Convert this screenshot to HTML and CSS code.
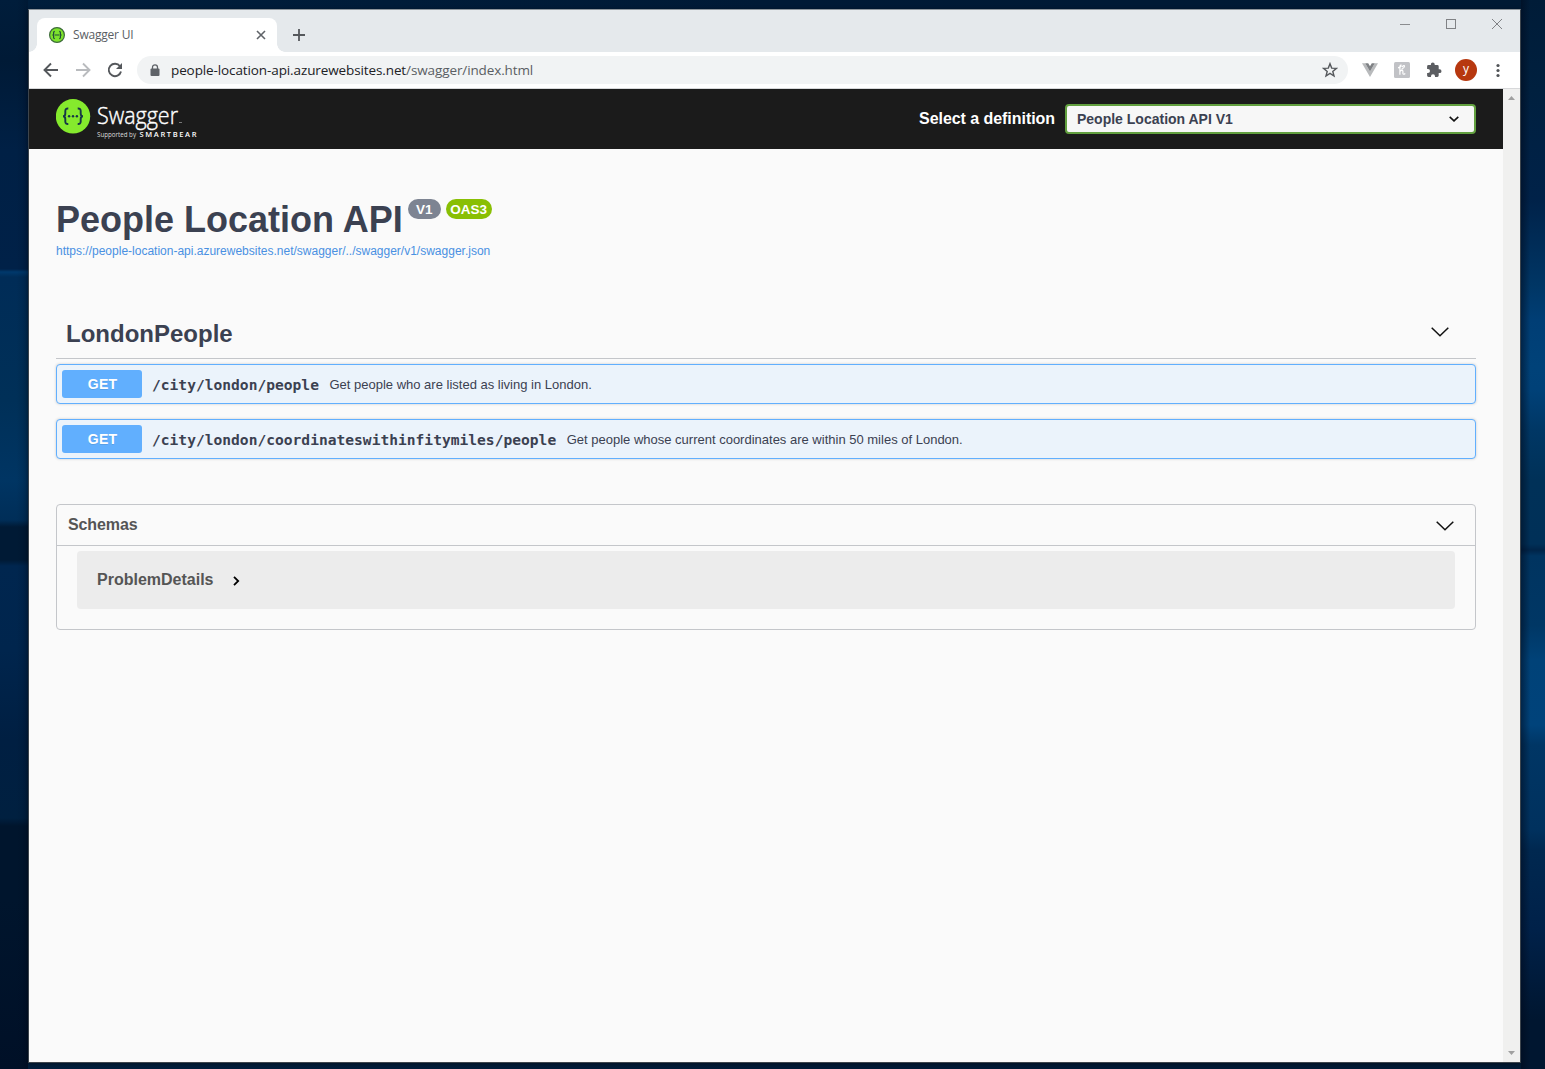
FILE: index.html
```html
<!DOCTYPE html>
<html lang="en">
<head>
<meta charset="utf-8">
<title>Swagger UI</title>
<link rel="stylesheet" href="styles.css">
</head>
<body>
<div class="desktop">
  <div class="wall wall-left"></div>
  <div class="window">
    <div class="tabstrip">
      <div class="tab">
        <svg class="favicon" width="16" height="16" viewBox="0 0 16 16"><circle cx="8" cy="8" r="7.4" fill="#7de32c" stroke="#3d6b3a" stroke-width="1.2"/><path d="M5.8 4.3Q4.6 4.3 4.6 5.5V7Q4.6 8 3.5 8Q4.6 8 4.6 9V10.500Q4.600 11.700 5.800 11.700M10.200 4.300Q11.400 4.300 11.400 5.500V7Q11.400 8 12.500 8Q11.400 8 11.400 9V10.500Q11.400 11.700 10.200 11.700M5.500 8H10.500" fill="none" stroke="#234a3b" stroke-width="1.200"/></svg>
        <span class="tab-title">Swagger UI</span>
        <svg class="tab-close" width="10" height="10" viewBox="0 0 10 10"><path d="M1 1L9 9M9 1L1 9" stroke="#5f6368" stroke-width="1.600"/></svg>
      </div>
      <svg class="new-tab" width="14" height="14" viewBox="0 0 14 14"><path d="M7 1V13M1 7H13" stroke="#55585c" stroke-width="1.800"/></svg>
      <div class="controls">
        <svg width="11" height="11" viewBox="0 0 11 11"><path d="M0 5.500H10" stroke="#8a8c8f"/></svg>
        <svg width="11" height="11" viewBox="0 0 11 11"><rect x="0.500" y="0.500" width="9" height="9" fill="none" stroke="#808285"/></svg>
        <svg width="11" height="11" viewBox="0 0 11 11"><path d="M0 0L10 10M10 0L0 10" stroke="#808285"/></svg>
      </div>
    </div>
    <div class="toolbar">
      <svg class="nav" width="16" height="16" viewBox="0 0 16 16"><path d="M15 8H2M8 1.500L1.500 8L8 14.500" fill="none" stroke="#55585c" stroke-width="1.900"/></svg>
      <svg class="nav" width="16" height="16" viewBox="0 0 16 16"><path d="M1 8H14M8 1.500L14.500 8L8 14.500" fill="none" stroke="#b9bbbe" stroke-width="1.900"/></svg>
      <svg class="nav" width="16" height="16" viewBox="0 0 16 16"><path d="M13 4.300A6.200 6.200 0 1 0 14 9.500" fill="none" stroke="#55585c" stroke-width="1.900"/><path d="M15 1V7H9Z" fill="#55585c"/></svg>
      <div class="omnibox">
        <svg width="10" height="13" viewBox="0 0 10 13"><rect x="0.500" y="4.500" width="9" height="7.500" rx="1" fill="#5f6368"/><path d="M2.500 5V3.300A2.500 2.500 0 0 1 7.500 3.300V5" fill="none" stroke="#5f6368" stroke-width="1.300"/></svg>
        <span class="url">people-location-api.azurewebsites.net<span class="path">/swagger/index.html</span></span>
        <svg class="star" width="16" height="16" viewBox="0 0 16 16"><path d="M8 1.700L9.700 6.100L14.400 6.400L10.800 9.400L12 14L8 11.400L4 14L5.200 9.400L1.600 6.400L6.300 6.100Z" fill="none" stroke="#55585c" stroke-width="1.400"/></svg>
      </div>
      <div class="extensions">
        <svg width="16" height="16" viewBox="0 0 16 16"><path d="M0 1.200H3.200L8 9.500L12.800 1.200H16L8 15Z" fill="#b8babc"/><path d="M3.200 1.200H6.200L8 4.200L9.800 1.200H12.800L8 9.600Z" fill="#7e8184"/></svg>
        <svg width="16" height="16" viewBox="0 0 16 16"><rect width="16" height="16" rx="1.500" fill="#c1c2c6"/><path d="M4 5.800Q7.200 5.200 7 3Q5.800 3 5.900 6V12.800M5.900 9.500Q8.800 6.800 8.900 9.500V11.500Q9.200 13 11.300 11.500M7.800 5.200Q10.500 2.300 10.500 4.300Q10.300 6.300 7.500 7.300" fill="none" stroke="#fff" stroke-width="1.200"/></svg>
        <svg width="16" height="16" viewBox="0 0 16 16"><path d="M13.600 7.300H12.700V4.500Q12.700 3.100 11.300 3.100H8.700V2.300A1.900 1.900 0 0 0 4.900 2.300V3.100H2.500Q1.100 3.100 1.100 4.500V7H2A2 2 0 0 1 2 11H1.100V13.600Q1.100 15 2.500 15H5V14.200A2 2 0 0 1 9 14.200V15H11.300Q12.700 15 12.700 13.600V11.100H13.600A1.900 1.900 0 0 0 13.600 7.300Z" fill="#5b5d61"/></svg>
        <span class="avatar">y</span>
        <svg width="4" height="16" viewBox="0 0 4 16"><g fill="#505357"><circle cx="2" cy="3.500" r="1.600"/><circle cx="2" cy="8.500" r="1.600"/><circle cx="2" cy="13.500" r="1.600"/></g></svg>
      </div>
    </div>
    <div class="viewport">
      <div class="page">
        <header class="topbar">
          <svg class="logo" width="142" height="44" viewBox="0 0 142 44">
            <circle cx="17" cy="17.300" r="17.200" fill="#85ea2d"/>
            <path d="M12.300 9.500Q9.300 9.300 9.300 12V14.500Q9.300 17.300 7 17.300Q9.300 17.300 9.300 20V22.500Q9.300 25.200 12.300 25M21.700 9.500Q24.700 9.300 24.700 12V14.500Q24.700 17.300 27 17.300Q24.700 17.300 24.700 20V22.500Q24.700 25.200 21.700 25" fill="none" stroke="#173647" stroke-width="1.900"/>
            <g fill="#173647"><circle cx="13.100" cy="17.300" r="1.200"/><circle cx="17" cy="17.300" r="1.200"/><circle cx="20.900" cy="17.300" r="1.200"/></g>
            <text class="brand" x="41" y="25" textLength="81" lengthAdjust="spacingAndGlyphs">Swagger</text>
            <path d="M123 23.500H126" stroke="#777"/>
            <text class="support" x="41" y="38" textLength="39" lengthAdjust="spacingAndGlyphs">Supported by</text>
            <text class="bear" x="83.500" y="38" textLength="57" lengthAdjust="spacing">SMARTBEAR</text>
          </svg>
          <div class="definition">
            <span class="definition-label">Select a definition</span>
            <div class="select">People Location API V1
              <svg width="10" height="6" viewBox="0 0 10 6"><path d="M0.700 0.800L5 4.800L9.300 0.800" fill="none" stroke="#111" stroke-width="1.600"/></svg>
            </div>
          </div>
        </header>
        <main class="content">
          <div class="info">
            <h1>People Location API</h1><span class="badge version">V1</span><span class="badge oas">OAS3</span>
          </div>
          <a class="spec-url">https://people-location-api.azurewebsites.net/swagger/../swagger/v1/swagger.json</a>
          <section class="tag">
            <div class="tag-head"><h2>LondonPeople</h2>
              <svg width="18" height="10" viewBox="0 0 18 10"><path d="M0.700 0.700L9 8.800L17.300 0.700" fill="none" stroke="#111" stroke-width="1.500"/></svg></div>
            <div class="operation"><span class="method">GET</span><span class="route">/city/london/people</span><span class="summary">Get people who are listed as living in London.</span></div>
            <div class="operation"><span class="method">GET</span><span class="route">/city/london/coordinateswithinfitymiles/people</span><span class="summary">Get people whose current coordinates are within 50 miles of London.</span></div>
          </section>
          <section class="schemas">
            <div class="schemas-head"><h3>Schemas</h3>
              <svg width="18" height="10" viewBox="0 0 18 10"><path d="M0.700 0.700L9 8.800L17.300 0.700" fill="none" stroke="#111" stroke-width="1.500"/></svg></div>
            <div class="model">ProblemDetails
              <svg width="7" height="10" viewBox="0 0 7 10"><path d="M1 0.800L5.200 5L1 9.200" fill="none" stroke="#000" stroke-width="1.800"/></svg></div>
          </section>
        </main>
      </div>
      <div class="scrollbar">
        <svg width="7" height="4" viewBox="0 0 7 4"><path d="M0 4L3.500 0L7 4Z" fill="#a0a0a0"/></svg>
        <svg width="7" height="4" viewBox="0 0 7 4"><path d="M0 0H7L3.500 4Z" fill="#a0a0a0"/></svg>
      </div>
    </div>
  </div>
  <div class="wall wall-right"></div>
</div>
</body>
</html>
```
FILE: styles.css
```css
* { box-sizing: border-box; }
body { margin: 0; font-family: "Liberation Sans", Arial, sans-serif; color: #3b4151; overflow: hidden; }
svg { display: block; flex: none; }
h1, h2, h3 { margin: 0; }

.desktop {
  display: grid;
  grid-template-columns: 28px 1493px 24px;
  height: 1069px;
  background: linear-gradient(90deg, #001e3c, #001a36 50%, #001a34);
}
.wall-left {
  background: linear-gradient(90deg, transparent 60%, rgba(0, 8, 25, .2)),
    linear-gradient(#001d3b 0, #001a36 60px, #002045 150px, #002148 269px, #00396c 272px, #002c57 277px, #003058 400px, #003563 480px, #002e58 520px, #001a35 527px, #001a35 560px, #00264f 566px, #00254d 650px, #001f42 740px, #002040 818px, #00152d 826px, #00152d 900px, #001027 1069px);
}
.wall-right {
  background: linear-gradient(90deg, rgba(0, 8, 25, .5), transparent 40%),
    linear-gradient(#001c38 0, #00203f 90px, #002249 200px, #003665 285px, #003e75 320px, #004279 366px, #004178 390px, #003765 430px, #003158 480px, #003058 544px, #002448 550px, #003460 556px, #003765 625px, #004278 660px, #00437b 725px, #003665 745px, #00315e 830px, #002850 850px, #002149 930px, #001630 1020px, #001630 1069px);
}

.window {
  display: flex;
  flex-direction: column;
  height: 1054px;
  margin-top: 9px;
  border: 1px solid #3d454d;
  border-top-color: #8e959b;
  background: #fff;
  box-shadow: 0 1px 4px rgba(0, 0, 0, .4);
}
.tabstrip { display: flex; flex: none; height: 42px; padding-left: 8px; background: #e5e9ec; }
.tab {
  position: relative;
  display: flex;
  align-items: center;
  width: 240px;
  height: 34px;
  margin-top: 8px;
  padding: 0 11px 0 12px;
  border-radius: 8px 8px 0 0;
  background: #fff;
}
.tab::before, .tab::after {
  content: "";
  position: absolute;
  bottom: 0;
  width: 8px;
  height: 8px;
}
.tab::before { left: -8px; background: radial-gradient(circle at 0 0, transparent 7.5px, #fff 8px); }
.tab::after { right: -8px; background: radial-gradient(circle at 100% 0, transparent 7.5px, #fff 8px); }
.tab-title { margin: 0 0 2px 8px; font: 12px "Open Sans", sans-serif; letter-spacing: -.2px; color: #5a5e64; }
.tab-close { margin-left: auto; }
.new-tab { margin: 18px 0 0 15px; }
.controls { display: flex; gap: 35px; margin: 9px 17px 0 auto; }

.toolbar { display: flex; flex: none; align-items: center; height: 37px; padding-left: 14px; border-bottom: 1px solid #d7d8da; background: #fff; }
.nav { margin-right: 16px; }
.omnibox { display: flex; align-items: center; width: 1211px; height: 28px; margin-left: -2px; padding: 0 10px 0 13px; border-radius: 14px; background: #f1f3f4; }
.url { margin-left: 11px; font: 13.5px "Open Sans", sans-serif; letter-spacing: -.11px; color: #202124; white-space: nowrap; }
.path { color: #5a5e63; }
.star { margin-left: auto; }
.extensions { display: flex; align-items: center; gap: 16px; margin-left: 14px; }
.avatar { width: 22px; height: 22px; margin: 0 -3px; border-radius: 50%; background: #b7380f; color: #fff; font: 12px/20px "Open Sans", sans-serif; text-align: center; }
.avatar + svg { margin-left: 6px; }

.viewport { display: flex; flex: 1; min-height: 0; }
.page { width: 1474px; background: #fafafa; }
.scrollbar { display: flex; flex-direction: column; justify-content: space-between; align-items: center; width: 17px; padding: 7px 0; background: #f0f0ef; }

.topbar { display: flex; justify-content: space-between; height: 60px; padding: 10px 27px 0; background: #1b1b1b; }
.brand { font: 300 23px "Open Sans", sans-serif; fill: #fff; stroke: #fff; stroke-width: .4px; }
.support { font: 6.5px "Open Sans", sans-serif; fill: #ddd; }
.bear { font: 600 7.5px "Open Sans", sans-serif; fill: #fff; }
.definition { display: flex; align-items: center; gap: 10px; height: 40px; color: #fff; font-size: 16px; font-weight: bold; }
.definition-label { letter-spacing: -.05px; }
.select { display: flex; align-items: center; justify-content: space-between; width: 411px; height: 30px; padding: 0 15px 0 10px; border: 2px solid #62a03f; border-radius: 4px; background: #f7f7f7; color: #3b4151; font-size: 14px; }

.content { padding: 48px 27px 0; }
.info { display: flex; align-items: flex-start; height: 46px; }
.info h1 { font-size: 36px; line-height: 46px; white-space: nowrap; }
.badge { height: 20px; margin: 2px 0 0 5px; border-radius: 10px; color: #fff; font-size: 13.5px; font-weight: bold; line-height: 21px; text-align: center; }
.version { width: 33px; background: #7d8492; }
.oas { width: 46px; background: #89bf04; }
.spec-url { display: block; height: 16px; color: #4990e2; font-size: 12px; line-height: 16px; }

.tag { margin-top: 50px; }
.tag-head { display: flex; align-items: center; justify-content: space-between; height: 50px; margin-bottom: 5px; padding: 0 27px 0 10px; border-bottom: 1px solid #c4c6ca; }
.tag-head h2 { font-size: 24px; }
.tag-head svg { margin-bottom: 3px; }
.operation { display: flex; align-items: center; height: 40px; margin-bottom: 15px; padding: 0 5px; border: 1px solid #61affe; border-radius: 4px; background: #ebf3fb; box-shadow: 0 0 3px rgba(0, 0, 0, .19); }
.method { width: 80px; height: 28px; padding-left: 1px; border-radius: 3px; background: #61affe; color: #fff; font-size: 14px; font-weight: bold; letter-spacing: .2px; line-height: 28px; text-align: center; text-shadow: 0 1px 0 rgba(0, 0, 0, .1); }
.route { margin: 0 10.5px 0 10px; font: bold 14.6px "DejaVu Sans Mono", monospace; }
.summary { font-size: 13px; }

.schemas { height: 126px; margin-top: 45px; border: 1px solid #c4c6ca; border-radius: 4px; }
.schemas-head { display: flex; align-items: center; justify-content: space-between; height: 41px; padding: 0 21px 0 11px; border-bottom: 1px solid #c4c6ca; }
.schemas h3, .model { color: #555; font-size: 16px; font-weight: bold; }
.schemas h3 { letter-spacing: -.1px; }
.schemas-head svg { margin-top: 1px; }
.model { display: flex; align-items: center; gap: 20px; height: 58px; margin: 5px 20px 0; padding-left: 20px; border-radius: 4px; background: #ececec; }
.model svg { margin-top: 2px; }
```
